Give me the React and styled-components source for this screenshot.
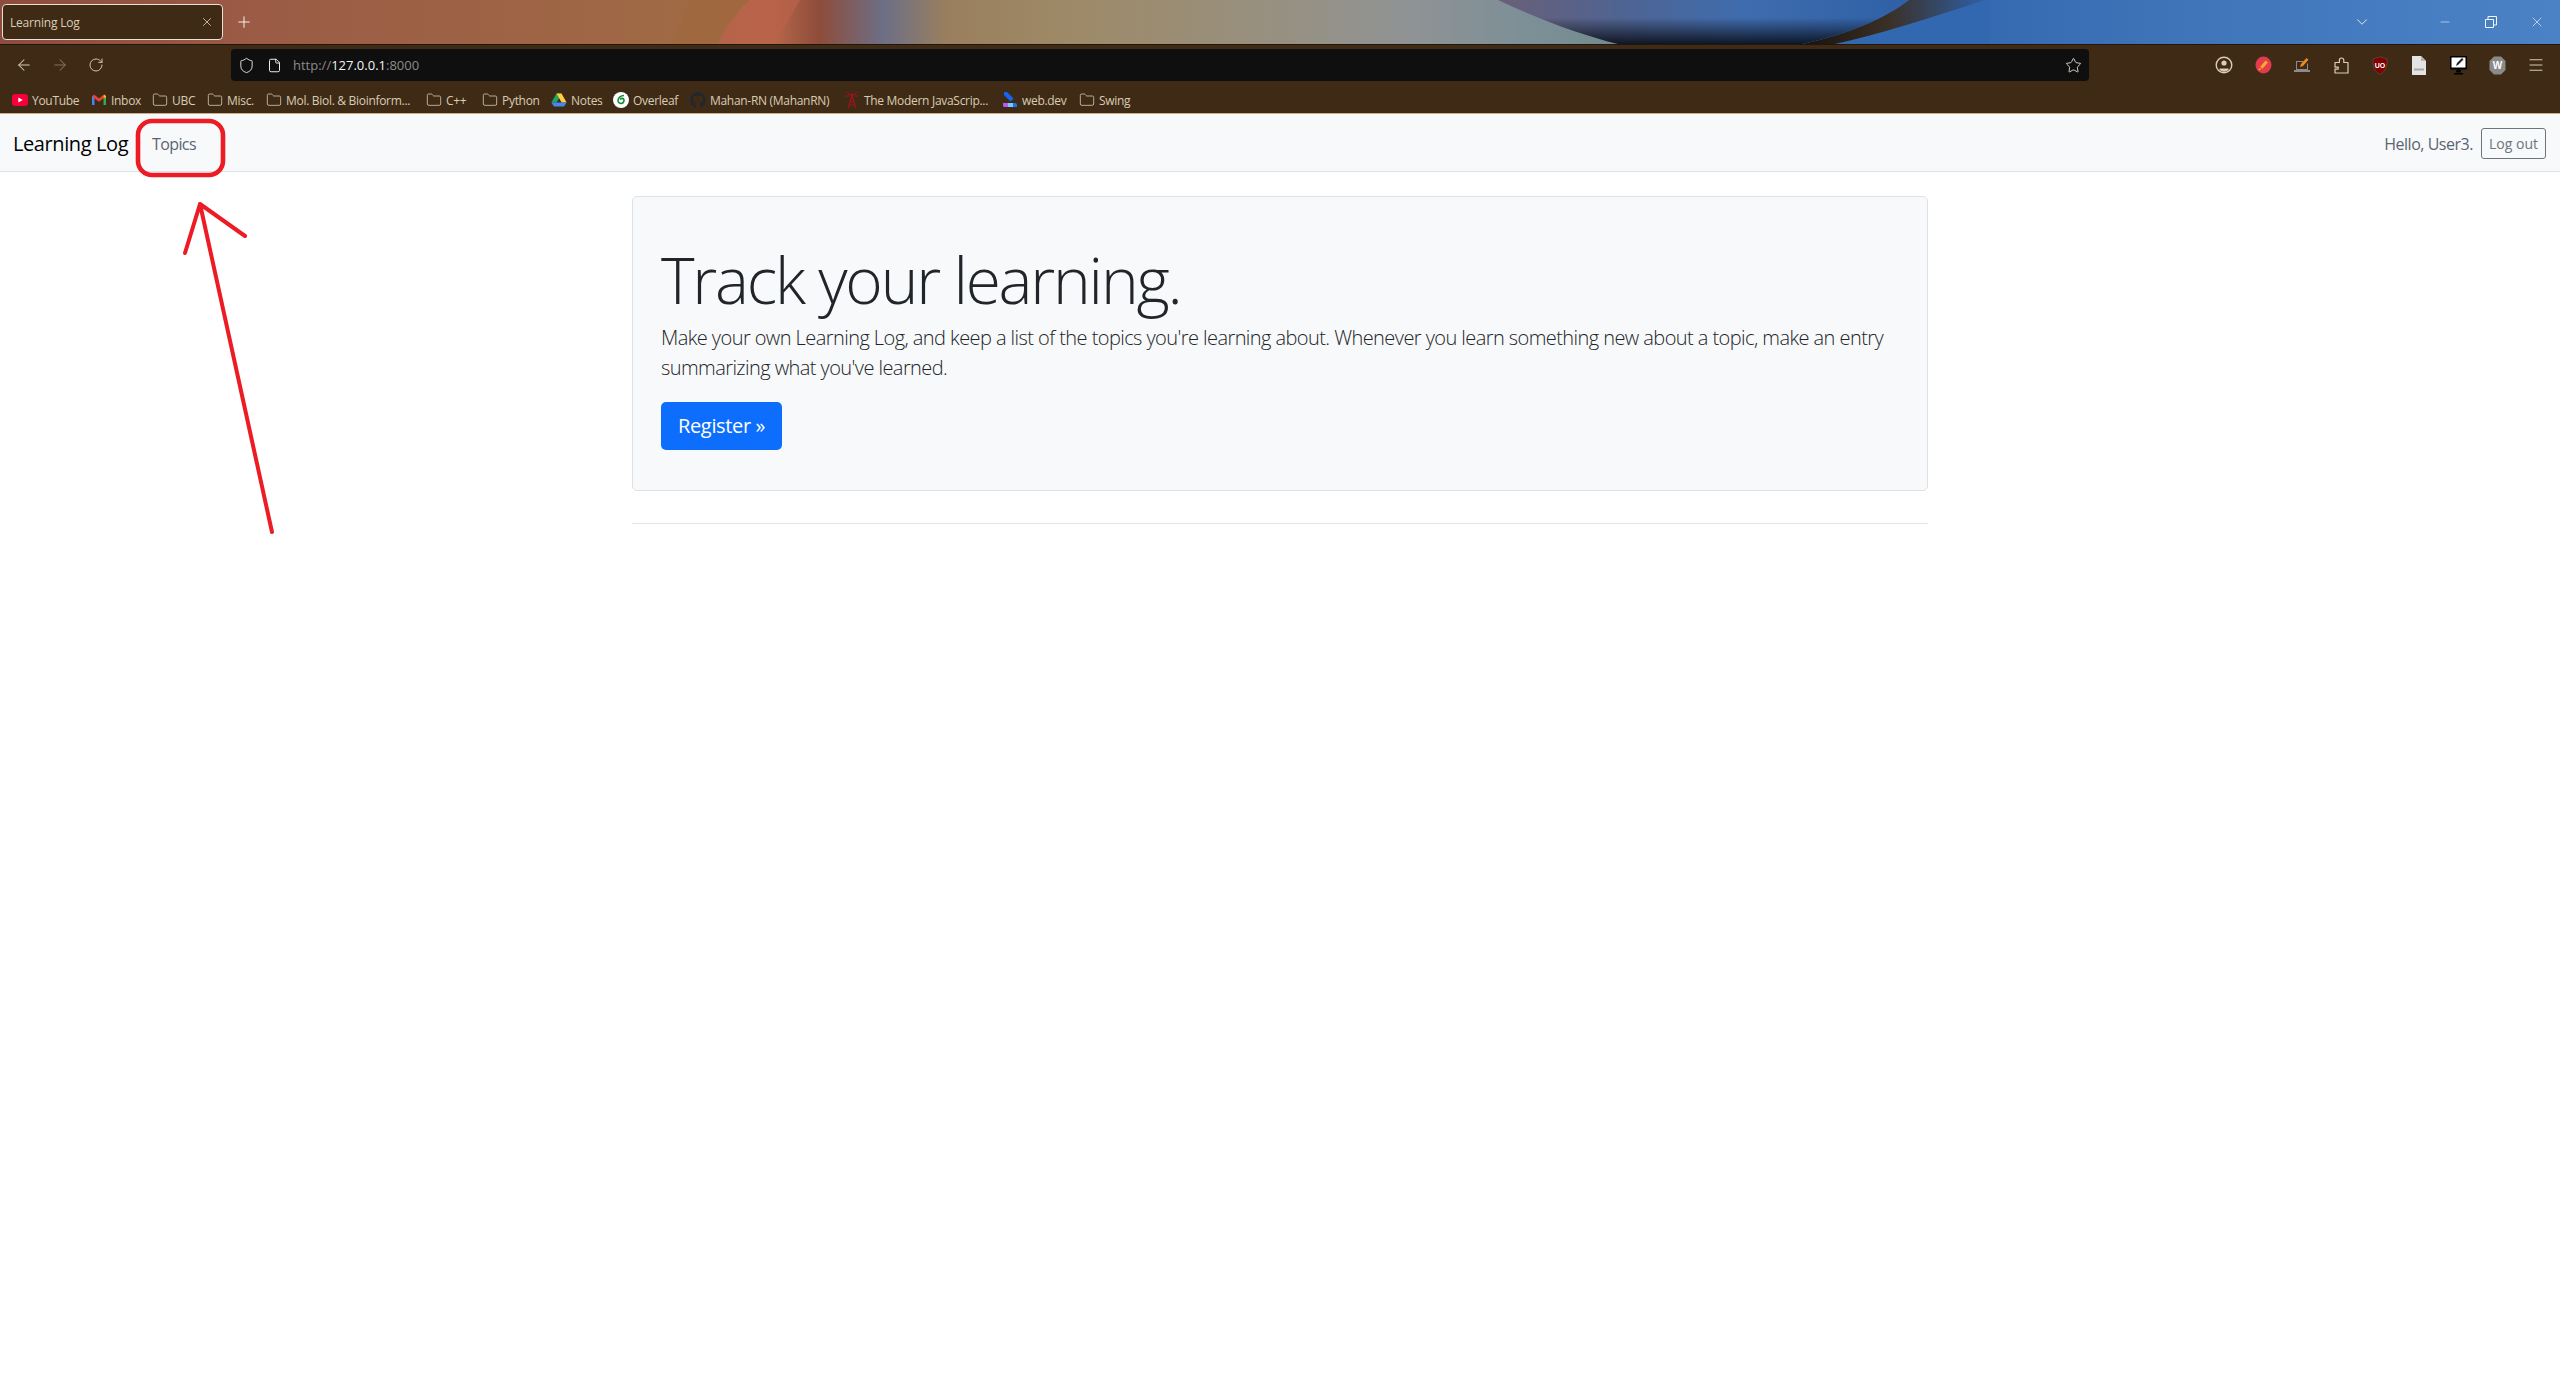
import React from "react";
import styled, { createGlobalStyle } from "styled-components";
import { ArrowLeft, ArrowRight, RotateCw, Shield, File, Star, X, Plus, ChevronDown, Minus, Menu, Folder } from "lucide-react";
import { FaGithub } from "react-icons/fa";

const Global = createGlobalStyle`
  html, body { margin: 0; padding: 0; background: #fff; overflow: hidden; }
  * { box-sizing: border-box; }
  body { font-family: "Open Sans", "Liberation Sans", sans-serif; font-stretch: 92%; }
`;

const Root = styled.div`
  position: relative;
  width: 2560px;
  height: 1392px;
  background: #fff;
  color: #212529;
`;

const TitleBar = styled.div`
  position: relative;
  height: 45px;
  border-bottom: 1px solid #21170b;
  display: flex;
  align-items: flex-start;
  overflow: hidden;
`;
const Wallpaper = styled.svg`
  position: absolute;
  left: 0;
  top: 0;
`;
const Tab = styled.div`
  position: relative;
  margin: 4px 0 0 2px;
  width: 221px;
  height: 36px;
  background: #3f2b15;
  border: 1px solid #e8e2d6;
  border-radius: 4px;
  display: flex;
  align-items: center;
  justify-content: space-between;
  padding: 0 8px 0 7px;
  color: #d8cdb6;
  font-size: 12px;
  letter-spacing: -0.2px;
`;
const NewTab = styled.div`
  position: relative;
  margin: 13px 0 0 12px;
  height: 18px;
  display: flex;
  color: #f4efe6;
`;
const WindowControls = styled.div`
  position: relative;
  margin: 13px 0 0 auto;
  display: flex;
  align-items: center;
  color: #f2f4f8;
`;
const ControlSlot = styled.div`
  width: ${(p) => p.$w}px;
  display: flex;
  justify-content: center;
`;

const Toolbar = styled.div`
  height: 36px;
  background: #3f2b15;
  padding: 4px 14px 0 14px;
  display: flex;
  align-items: flex-start;
`;
const NavIcons = styled.div`
  display: flex;
  gap: 16px;
  height: 32px;
  align-items: center;
  margin-right: 125px;
  color: #d9ccb4;
`;
const NavIcon = styled.div`
  width: 20px;
  display: flex;
  justify-content: center;
  opacity: ${(p) => (p.$dim ? 0.45 : 1)};
`;
const UrlBar = styled.div`
  flex: 1;
  height: 32px;
  background: #0f0f0f;
  border-radius: 4px;
  display: flex;
  align-items: center;
  padding: 0 0 0 5px;
  color: #f1ece2;
`;
const UrlIcon = styled.div`
  width: 20px;
  margin-right: 8px;
  display: flex;
  justify-content: center;
`;
const UrlText = styled.div`
  padding-left: 1px;
  font-size: 13px;
  color: #8b8b8b;
  b { font-weight: 400; color: #f5f5f5; }
`;
const StarSlot = styled.div`
  margin-left: auto;
  margin-right: 6px;
  width: 20px;
  display: flex;
  justify-content: center;
`;
const ExtIcons = styled.div`
  display: flex;
  gap: 19px;
  height: 32px;
  align-items: center;
  margin-left: 125px;
  color: #dccdb0;
`;
const ExtIcon = styled.div`
  width: 20px;
  height: 20px;
  display: flex;
  align-items: center;
  justify-content: center;
`;

const Bookmarks = styled.div`
  height: 33px;
  background: #3f2b15;
  border-bottom: 1px solid #c9ae8a;
  display: flex;
  align-items: center;
  padding: 6px 0 0 12px;
`;
const Bookmark = styled.div`
  width: ${(p) => p.$w}px;
  flex: none;
  display: flex;
  align-items: center;
  gap: 4px;
  font-size: 12px;
  letter-spacing: -0.3px;
  color: #d9ccb4;
  white-space: nowrap;
  svg { flex: none; }
`;

const Navbar = styled.nav`
  height: 58px;
  background: #f8f9fa;
  border-bottom: 1px solid #dee2e6;
  display: flex;
  align-items: center;
  padding: 2px 14px 0 13px;
`;
const Brand = styled.a`
  width: 139px;
  font-size: 20px;
  letter-spacing: -0.4px;
  color: #000;
`;
const NavLink = styled.a`
  font-size: 16px;
  letter-spacing: -0.6px;
  color: #5a6572;
`;
const Hello = styled.span`
  margin-left: auto;
  margin-right: 8px;
  font-size: 16px;
  letter-spacing: -0.47px;
  color: #5a6572;
`;
const LogOut = styled.button`
  width: 65px;
  height: 31px;
  padding: 0;
  margin-top: -1px;
  font: inherit;
  font-size: 14px;
  color: #6c757d;
  background: transparent;
  border: 1px solid #6c757d;
  border-radius: 3px;
`;

const Main = styled.main`
  width: 1296px;
  margin: 24px auto 0;
`;
const Jumbo = styled.section`
  height: 295px;
  background: #f8f9fa;
  border: 1px solid #dee2e6;
  border-radius: 5px;
  padding: 45px 28px 40px;
`;
const Display = styled.h1`
  margin: 0 0 4px;
  font-size: 64px;
  font-weight: 300;
  line-height: 76.8px;
  letter-spacing: -2.2px;
  color: #212529;
`;
const Lead = styled.p`
  margin: 0 0 19px;
  font-size: 20px;
  font-weight: 300;
  line-height: 30px;
  letter-spacing: -0.57px;
  color: #212529;
`;
const Primary = styled.a`
  display: inline-flex;
  align-items: center;
  height: 48px;
  padding: 0 17px;
  font-size: 20px;
  letter-spacing: -0.35px;
  color: #fff;
  background: #0d6efd;
  border-radius: 5px;
`;
const Rule = styled.hr`
  margin: 32px 0 0;
  border: 0;
  border-top: 1px solid #e3e4e5;
`;
const Annotation = styled.svg`
  position: absolute;
  left: 0;
  top: 0;
  pointer-events: none;
`;

const Fold = () => <Folder size={16} strokeWidth={1.2} color="#d9ccb4" />;
const YouTube = () => (
  <svg width="16" height="16" viewBox="0 0 16 16">
    <rect x="0" y="2" width="16" height="12" rx="3" fill="#f5003c" />
    <path d="M6.3 5.4v5.2L10.8 8z" fill="#fff" />
  </svg>
);
const Gmail = () => (
  <svg width="16" height="16" viewBox="0 0 16 16">
    <path d="M1 13V4l2.5 1v8z" fill="#4285f4" />
    <path d="M15 13V4l-2.5 1v8z" fill="#34a853" />
    <path d="M1 4.5 3 2.6 8 6.5l5-3.9 2 1.9-7 5.2z" fill="#ea4335" />
    <path d="M12.5 5.5 13 2.6l2 1.3V6z" fill="#fbbc04" />
  </svg>
);
const Drive = () => (
  <svg width="16" height="16" viewBox="0 0 16 16">
    <path d="M5.5 1.5h5L8 6.5 5.500 10.500H.4z" fill="#1fa463" />
    <path d="M5.5 1.5h5l5.1 9h-5z" fill="#ffcf3f" />
    <path d="M.4 10.500h15.200l-2.600 4H3z" fill="#4688f1" />
  </svg>
);
const Overleaf = () => (
  <svg width="16" height="16" viewBox="0 0 16 16">
    <circle cx="8" cy="8" r="8" fill="#fff" />
    <path d="M11 3.5C8 3.6 5 5.5 5 8.5a3 3 0 1 0 5.6-1.5C9.8 6 8 6.2 7.2 7.6" fill="none" stroke="#138a36" strokeWidth="1.6" />
  </svg>
);
const Tower = () => (
  <svg width="16" height="18" viewBox="0 0 16 18" fill="none" stroke="#a3121c" strokeWidth="1.2">
    <path d="M8 4 4.5 17M8 4l3.5 13M6 11h4M5.2 14h5.6" />
    <path d="M3 1l3 3M13 1l-3 3M1.5 5H5M14.5 5H11" strokeWidth="1" />
    <circle cx="8" cy="4" r="1.2" fill="#a3121c" />
  </svg>
);
const WebDev = () => (
  <svg width="16" height="18" viewBox="0 0 16 18">
    <path d="M2 1h3l6.5 6.5-3 3L2 4z" fill="#1166f5" />
    <path d="M1 12h5v4H2.500A1.500 1.500 0 0 1 1 14.500z" fill="#b15cf2" />
    <path d="M6 12h6v4H6z" fill="#7cc4fa" />
    <path d="M11 12h2.500A2 2 0 0 1 15 14v2h-4z" fill="#1a73f0" />
  </svg>
);

const bookmarks = [
  { w: 79, icon: <YouTube />, label: "YouTube" },
  { w: 61, icon: <Gmail />, label: "Inbox" },
  { w: 55, icon: <Fold />, label: "UBC" },
  { w: 59, icon: <Fold />, label: "Misc." },
  { w: 160, icon: <Fold />, label: "Mol. Biol. & Bioinform..." },
  { w: 56, icon: <Fold />, label: "C++" },
  { w: 69, icon: <Fold />, label: "Python" },
  { w: 62, icon: <Drive />, label: "Notes" },
  { w: 77, icon: <Overleaf />, label: "Overleaf" },
  { w: 154, icon: <FaGithub size={16} color="#22272e" />, label: "Mahan-RN (MahanRN)" },
  { w: 158, icon: <Tower />, label: "The Modern JavaScrip..." },
  { w: 77, icon: <WebDev />, label: "web.dev" },
  { w: 60, icon: <Fold />, label: "Swing" },
];

const extensions = [
  <svg key="a" width="18" height="18" viewBox="0 0 18 18" fill="none" stroke="#dccdb0" strokeWidth="1.4"><circle cx="9" cy="9" r="7.8" /><circle cx="9" cy="7" r="2.6" fill="#dccdb0" stroke="none" /><path d="M4.500 12.500h9v1.500a7 7 0 0 1-9 0z" fill="#dccdb0" stroke="none" /></svg>,
  <svg key="b" width="17" height="18" viewBox="0 0 17 18"><ellipse cx="8.500" cy="9" rx="8" ry="8.500" fill="#e23b4e" /><path d="M5 11 10.500 4.500l2.500 2-5.500 6.200zM4.500 12l2 1.500-3.500.8z" fill="#f8a825" /></svg>,
  <svg key="c" width="18" height="18" viewBox="0 0 18 18"><path d="M3 14V5h8l-1 1H4v7h10V8l1-1v7z" fill="#8c8c8c" /><rect x="1" y="14" width="16" height="2" fill="#8c8c8c" /><path d="M7 11l1-3 5.500-6 2 1.800L10 10z" fill="#f28a1e" /></svg>,
  <svg key="d" width="15" height="18" viewBox="0 0 15 18" fill="none" stroke="#dccdb0" strokeWidth="1.2" strokeLinejoin="round"><path d="M1 17h13V6.500H9.800V4.200a2.200 2.200 0 1 0-4.400 0v2.300H1v4.600h3.200v2H1z" /></svg>,
  <svg key="e" width="16" height="19" viewBox="0 0 16 19"><path d="M8 .8 15 3c.300 7-1 12-7 15.400C2 15 .7 10 1 3z" fill="#800000" stroke="#5a5a5a" strokeWidth=".6" /><text x="8" y="11.500" textAnchor="middle" fontSize="7" fontWeight="700" fill="#fff" fontFamily="Liberation Sans">UO</text></svg>,
  <svg key="f" width="14" height="19" viewBox="0 0 14 19"><path d="M0 0h9l5 5v14H0z" fill="#e4e4e4" /><path d="M9 0l5 5H9z" fill="#b5b5b5" /><rect x="2" y="12.500" width="10" height="2" fill="#a8a8a8" /></svg>,
  <svg key="g" width="17" height="19" viewBox="0 0 17 19"><rect x="0" y="0" width="17" height="13.500" rx="1" fill="#000" /><rect x="1.500" y="1.500" width="14" height="10" fill="#fff" /><path d="M6 10l1-3 5-5 1.500 1.500-5 5z" fill="#222" /><path d="M6.500 13.500h4l.500 3H6zM4 17h9v1.500H4z" fill="#000" /></svg>,
  <svg key="h" width="17" height="19" viewBox="0 0 17 19"><path d="M5 .5h7l4.500 4.500v9L12 18.500H5L.5 14V5z" fill="#8a8a8a" /><text x="8.500" y="13" textAnchor="middle" fontSize="10" fontWeight="700" fill="#fff" fontFamily="Liberation Sans">W</text></svg>,
  <Menu key="i" size={18} strokeWidth={1.3} color="#dccdb0" />,
];

export default function App() {
  return (
    <Root>
      <Global />
      <TitleBar>
        <Wallpaper width="2560" height="44" viewBox="0 0 2560 44">
          <defs>
            <linearGradient id="base" x1="0" x2="2560" y1="0" y2="0" gradientUnits="userSpaceOnUse">
              <stop offset="0" stopColor="#8e4b3f" />
              <stop offset="0.1" stopColor="#9b5b45" />
              <stop offset="0.27" stopColor="#a06a45" />
              <stop offset="0.3" stopColor="#bb6a4c" />
              <stop offset="0.32" stopColor="#8e4c3a" />
              <stop offset="0.345" stopColor="#6c6f86" />
              <stop offset="0.37" stopColor="#9a7f5e" />
              <stop offset="0.42" stopColor="#9e8a68" />
              <stop offset="0.5" stopColor="#979081" />
              <stop offset="0.55" stopColor="#8f9394" />
              <stop offset="0.6" stopColor="#7b8f97" />
              <stop offset="0.64" stopColor="#6e8a8a" />
              <stop offset="0.72" stopColor="#2f63aa" />
              <stop offset="0.85" stopColor="#3f74b9" />
              <stop offset="1" stopColor="#4b82c6" />
            </linearGradient>
            <linearGradient id="orb" x1="1498" x2="1909" y1="0" y2="0" gradientUnits="userSpaceOnUse">
              <stop offset="0" stopColor="#6a5f78" />
              <stop offset="0.3" stopColor="#4f6492" />
              <stop offset="0.6" stopColor="#3f6cae" />
              <stop offset="1" stopColor="#2f60a6" />
            </linearGradient>
            <linearGradient id="shade" x1="0" x2="0" y1="0" y2="44" gradientUnits="userSpaceOnUse">
              <stop offset="0.4" stopColor="#06080f" stopOpacity="0" />
              <stop offset="1" stopColor="#06080f" stopOpacity="0.85" />
            </linearGradient>
            <linearGradient id="wedge" x1="1810" x2="1985" y1="0" y2="0" gradientUnits="userSpaceOnUse">
              <stop offset="0" stopColor="#1a140f" />
              <stop offset="0.45" stopColor="#3b3026" />
              <stop offset="1" stopColor="#2f5fa5" />
            </linearGradient>
          </defs>
          <rect width="2560" height="44" fill="url(#base)" />
          <path d="M718 44C726 26 736 12 750 0H690L672 44z" fill="#a0683f" />
          <path d="M718 44C726 26 736 12 750 0H800L775 44z" fill="#b9634a" opacity=".7" />
          <path d="M1850 44H1802C1850 34 1885 18 1909 0H1990V44z" fill="#3268b0" />
          <path d="M1802 44C1850 34 1885 18 1909 0H1985C1930 18 1880 34 1835 44z" fill="url(#wedge)" />
          <path d="M1498 0C1540 20 1585 36 1618 44H1802C1850 34 1885 18 1909 0z" fill="url(#orb)" />
          <path d="M1498 0C1540 20 1585 36 1618 44H1802C1850 34 1885 18 1909 0z" fill="url(#shade)" />
        </Wallpaper>
        <Tab>
          <span>Learning Log</span>
          <X size={14} strokeWidth={1.3} color="#e6dfd0" />
        </Tab>
        <NewTab><Plus size={18} strokeWidth={1.4} /></NewTab>
        <WindowControls>
          <ControlSlot $w={120}><ChevronDown size={18} strokeWidth={1.2} /></ControlSlot>
          <ControlSlot $w={46}><Minus size={14} strokeWidth={1} /></ControlSlot>
          <ControlSlot $w={46}>
            <svg width="12" height="12" viewBox="0 0 12 12" fill="none" stroke="currentColor"><path d="M.5 3.500h8v8h-8zM3 3.500v-3h8.500v8.500h-3" /></svg>
          </ControlSlot>
          <ControlSlot $w={46}><X size={16} strokeWidth={1} /></ControlSlot>
        </WindowControls>
      </TitleBar>

      <Toolbar>
        <NavIcons>
          <NavIcon><ArrowLeft size={18} strokeWidth={1.4} /></NavIcon>
          <NavIcon $dim><ArrowRight size={18} strokeWidth={1.4} /></NavIcon>
          <NavIcon><RotateCw size={16} strokeWidth={1.4} /></NavIcon>
        </NavIcons>
        <UrlBar>
          <UrlIcon><Shield size={17} strokeWidth={1.3} /></UrlIcon>
          <UrlIcon><File size={15} strokeWidth={1.6} /></UrlIcon>
          <UrlText>http://<b>127.0.0.1</b>:8000</UrlText>
          <StarSlot><Star size={17} strokeWidth={1.2} /></StarSlot>
        </UrlBar>
        <ExtIcons>
          {extensions.map((icon) => (
            <ExtIcon key={icon.key}>{icon}</ExtIcon>
          ))}
        </ExtIcons>
      </Toolbar>

      <Bookmarks>
        {bookmarks.map((b) => (
          <Bookmark key={b.label} $w={b.w}>
            {b.icon}
            <span>{b.label}</span>
          </Bookmark>
        ))}
      </Bookmarks>

      <Navbar>
        <Brand>Learning Log</Brand>
        <NavLink>Topics</NavLink>
        <Hello>Hello, User3.</Hello>
        <LogOut>Log out</LogOut>
      </Navbar>

      <Main>
        <Jumbo>
          <Display>Track your learning.</Display>
          <Lead>
            Make your own Learning Log, and keep a list of the topics you're learning about. Whenever you learn something new about a topic, make an entry summarizing what you've learned.
          </Lead>
          <Primary>Register »</Primary>
        </Jumbo>
        <Rule />
      </Main>

      <Annotation width="2560" height="1392" viewBox="0 0 2560 1392" fill="none" stroke="#ed1c24" strokeWidth="4" strokeLinecap="round" strokeLinejoin="round">
        <rect x="138" y="121" width="85" height="54" rx="14" strokeWidth="4.6" />
        <path d="M272 532 200 204M200 204 185 253M200 204 245 236" />
      </Annotation>
    </Root>
  );
}
